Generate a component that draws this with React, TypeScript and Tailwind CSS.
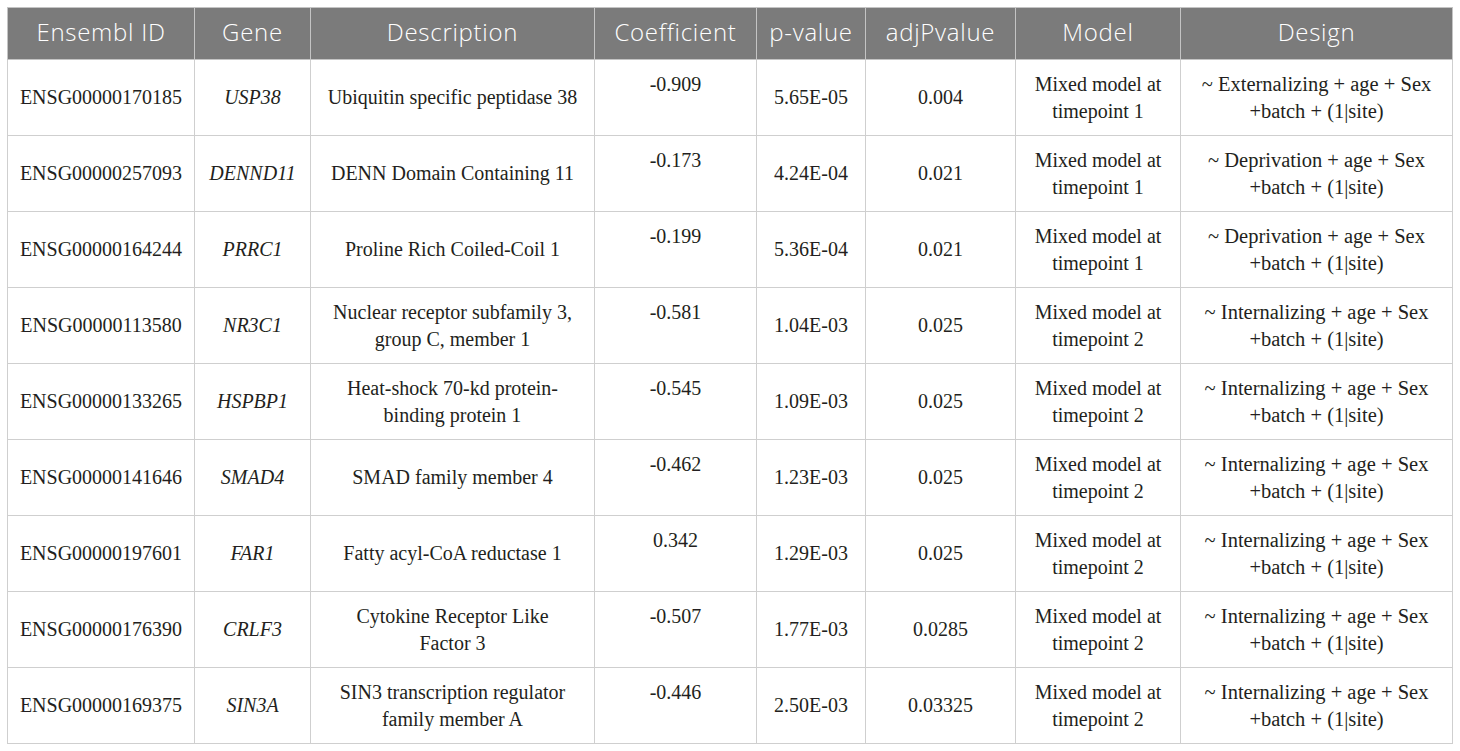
import React from "react";

type Row = {
  id: string;
  gene: string;
  desc: string[];
  coef: string;
  p: string;
  adj: string;
  tp: string;
  design: string;
};

const rows: Row[] = [
  { id: "ENSG00000170185", gene: "USP38", desc: ["Ubiquitin specific peptidase 38"], coef: "-0.909", p: "5.65E-05", adj: "0.004", tp: "1", design: "Externalizing" },
  { id: "ENSG00000257093", gene: "DENND11", desc: ["DENN Domain Containing 11"], coef: "-0.173", p: "4.24E-04", adj: "0.021", tp: "1", design: "Deprivation" },
  { id: "ENSG00000164244", gene: "PRRC1", desc: ["Proline Rich Coiled-Coil 1"], coef: "-0.199", p: "5.36E-04", adj: "0.021", tp: "1", design: "Deprivation" },
  { id: "ENSG00000113580", gene: "NR3C1", desc: ["Nuclear receptor subfamily 3,", "group C, member 1"], coef: "-0.581", p: "1.04E-03", adj: "0.025", tp: "2", design: "Internalizing" },
  { id: "ENSG00000133265", gene: "HSPBP1", desc: ["Heat-shock 70-kd protein-", "binding protein 1"], coef: "-0.545", p: "1.09E-03", adj: "0.025", tp: "2", design: "Internalizing" },
  { id: "ENSG00000141646", gene: "SMAD4", desc: ["SMAD family member 4"], coef: "-0.462", p: "1.23E-03", adj: "0.025", tp: "2", design: "Internalizing" },
  { id: "ENSG00000197601", gene: "FAR1", desc: ["Fatty acyl-CoA reductase 1"], coef: "0.342", p: "1.29E-03", adj: "0.025", tp: "2", design: "Internalizing" },
  { id: "ENSG00000176390", gene: "CRLF3", desc: ["Cytokine Receptor Like", "Factor 3"], coef: "-0.507", p: "1.77E-03", adj: "0.0285", tp: "2", design: "Internalizing" },
  { id: "ENSG00000169375", gene: "SIN3A", desc: ["SIN3 transcription regulator", "family member A"], coef: "-0.446", p: "2.50E-03", adj: "0.03325", tp: "2", design: "Internalizing" },
];

const headers = ["Ensembl ID", "Gene", "Description", "Coefficient", "p-value", "adjPvalue", "Model", "Design"];
const widths = ["w-[187px]", "w-[116px]", "w-[284px]", "w-[162px]", "w-[109px]", "w-[150px]", "w-[165px]", "w-[272px]"];

const cell = "border border-[#cfcfcf] text-center align-middle px-2";

function Lines({ lines }: { lines: string[] }) {
  return (
    <>
      {lines.map((l, i) => (
        <div key={i}>{l}</div>
      ))}
    </>
  );
}

export default function App() {
  return (
    <div className="bg-white w-[1460px] h-[751px] pt-[7px] pl-[7px]">
      <table className="table-fixed border-collapse w-[1446px] font-['Liberation_Serif',serif] text-[20px] leading-[27px] text-[#231f20]">
        <colgroup>
          {widths.map((w, i) => (
            <col key={i} className={w} />
          ))}
        </colgroup>
        <thead>
          <tr className="h-[52px] bg-[#7b7b7b]">
            {headers.map((h) => (
              <th
                key={h}
                className="border border-[#c4c4c4] text-center align-middle font-light text-white font-['Open_Sans',sans-serif] text-[24px] leading-[30px] tracking-[0.03em] px-1 pb-[3px]"
              >
                {h}
              </th>
            ))}
          </tr>
        </thead>
        <tbody>
          {rows.map((r) => (
            <tr key={r.id} className="h-[76px]">
              <td className={cell}>{r.id}</td>
              <td className={`${cell} italic`}>{r.gene}</td>
              <td className={cell}>
                <Lines lines={r.desc} />
              </td>
              <td className={`${cell} !align-top pt-[11px]`}>{r.coef}</td>
              <td className={cell}>{r.p}</td>
              <td className={cell}>{r.adj}</td>
              <td className={cell}>
                <Lines lines={["Mixed model at", `timepoint ${r.tp}`]} />
              </td>
              <td className={`${cell} text-[20.5px]`}>
                <Lines lines={[`~ ${r.design} + age + Sex`, "+batch + (1|site)"]} />
              </td>
            </tr>
          ))}
        </tbody>
      </table>
    </div>
  );
}
